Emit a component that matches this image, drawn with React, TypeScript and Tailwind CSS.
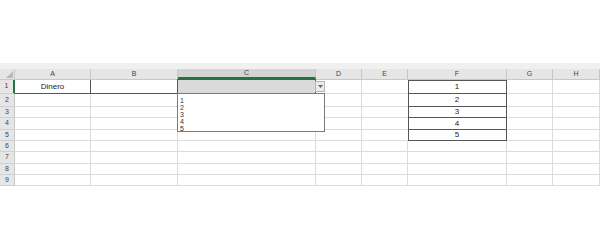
import React from 'react';

const cols = [
  { key: 'A', w: 'w-[76px]' },
  { key: 'B', w: 'w-[87px]' },
  { key: 'C', w: 'w-[138px]' },
  { key: 'D', w: 'w-[46px]' },
  { key: 'E', w: 'w-[46px]' },
  { key: 'F', w: 'w-[99px]' },
  { key: 'G', w: 'w-[46px]' },
  { key: 'H', w: 'w-[47px]' },
];

const rowHeights = ['h-[14px]', 'h-[13px]', 'h-[11px]', 'h-[12px]', 'h-[11px]', 'h-[11px]', 'h-[12px]', 'h-[11px]', 'h-[11px]'];

const font = { fontFamily: '"Liberation Sans", Arial, sans-serif' };

const DropdownList = () => (
  <div className="absolute left-[-1px] top-full z-10 w-[148px] h-[39px] bg-white border border-[#7a7a7a] pl-[2px] pt-[3px] flex flex-col text-[7px] leading-[7px] text-[#333]">
    {[1, 2, 3, 4, 5].map((n) => (
      <span key={n}>{n}</span>
    ))}
  </div>
);

const ArrowButton = () => (
  <div className="absolute left-full top-[1px] z-10 w-[10px] h-[11px] bg-[#ececec] border border-[#b4b4b4] flex items-center justify-center">
    <svg width="5" height="3" viewBox="0 0 5 3">
      <path d="M0 0h5L2.5 3z" fill="#666" />
    </svg>
  </div>
);

const Cell = ({ row, col }: { row: number; col: string }) => {
  const fValue = col === 'F' && row <= 5;
  let cls = 'border-r border-b border-[#dcdcdc]';
  let content: React.ReactNode = null;

  if (row === 1 && col === 'A') {
    cls = 'border-r border-b border-r-[#555] border-b-[#555]';
    content = 'Dinero';
  }
  if (row === 1 && col === 'B') cls = 'border-r border-b border-r-[#dcdcdc] border-b-[#555]';
  if (fValue) {
    cls = `border-r border-b border-[#555] ${row === 1 ? 'shadow-[inset_1px_1px_0_#555]' : 'shadow-[inset_1px_0_0_#555]'}`;
    content = row;
  }
  if (row >= 1 && row <= 5 && col === 'E') cls = 'border-b border-[#dcdcdc]';

  return (
    <div className={`${cls} h-full flex items-center justify-center text-[8px] text-[#222] relative`}>
      {content}
      {row === 1 && col === 'C' && (
        <>
          <div className="absolute inset-[-1px] border border-[#217346] bg-[#dadada]" />
          <ArrowButton />
          <DropdownList />
        </>
      )}
    </div>
  );
};

export default function App() {
  return (
    <div className="w-[600px] h-[249px] bg-white overflow-hidden flex flex-col" style={font}>
      <div className="h-[63px] shrink-0" />
      <div className="h-[6px] shrink-0 bg-[#f0f0f0]" />

      {/* column headers */}
      <div className="flex h-[11px] shrink-0 bg-[#e6e6e6] border-b border-[#c8c8c8]">
        <div className="w-[15px] shrink-0 border-r border-[#c8c8c8] relative">
          <svg className="absolute right-[1px] bottom-[1px]" width="7" height="7" viewBox="0 0 7 7">
            <path d="M7 0v7H0z" fill="#b8b8b8" />
          </svg>
        </div>
        {cols.map((c) => (
          <div
            key={c.key}
            className={`${c.w} shrink-0 border-r border-[#c8c8c8] flex items-center justify-center text-[7px] text-[#444] ${
              c.key === 'C' ? 'bg-[#d3d3d3] border-b-2 border-b-[#217346]' : ''
            }`}
          >
            {c.key}
          </div>
        ))}
      </div>

      {rowHeights.map((h, i) => {
        const row = i + 1;
        return (
          <div key={row} className={`flex ${h} shrink-0`}>
            <div
              className={`w-[15px] shrink-0 bg-[#e6e6e6] border-b border-[#d0d0d0] flex items-center justify-center text-[7px] text-[#444] ${
                row === 1 ? 'border-r-2 border-r-[#217346]' : 'border-r border-r-[#c8c8c8]'
              }`}
            >
              {row}
            </div>
            {cols.map((c) => (
              <div key={c.key} className={`${c.w} shrink-0`}>
                <Cell row={row} col={c.key} />
              </div>
            ))}
          </div>
        );
      })}
      <div className="flex-1" />
    </div>
  );
}
